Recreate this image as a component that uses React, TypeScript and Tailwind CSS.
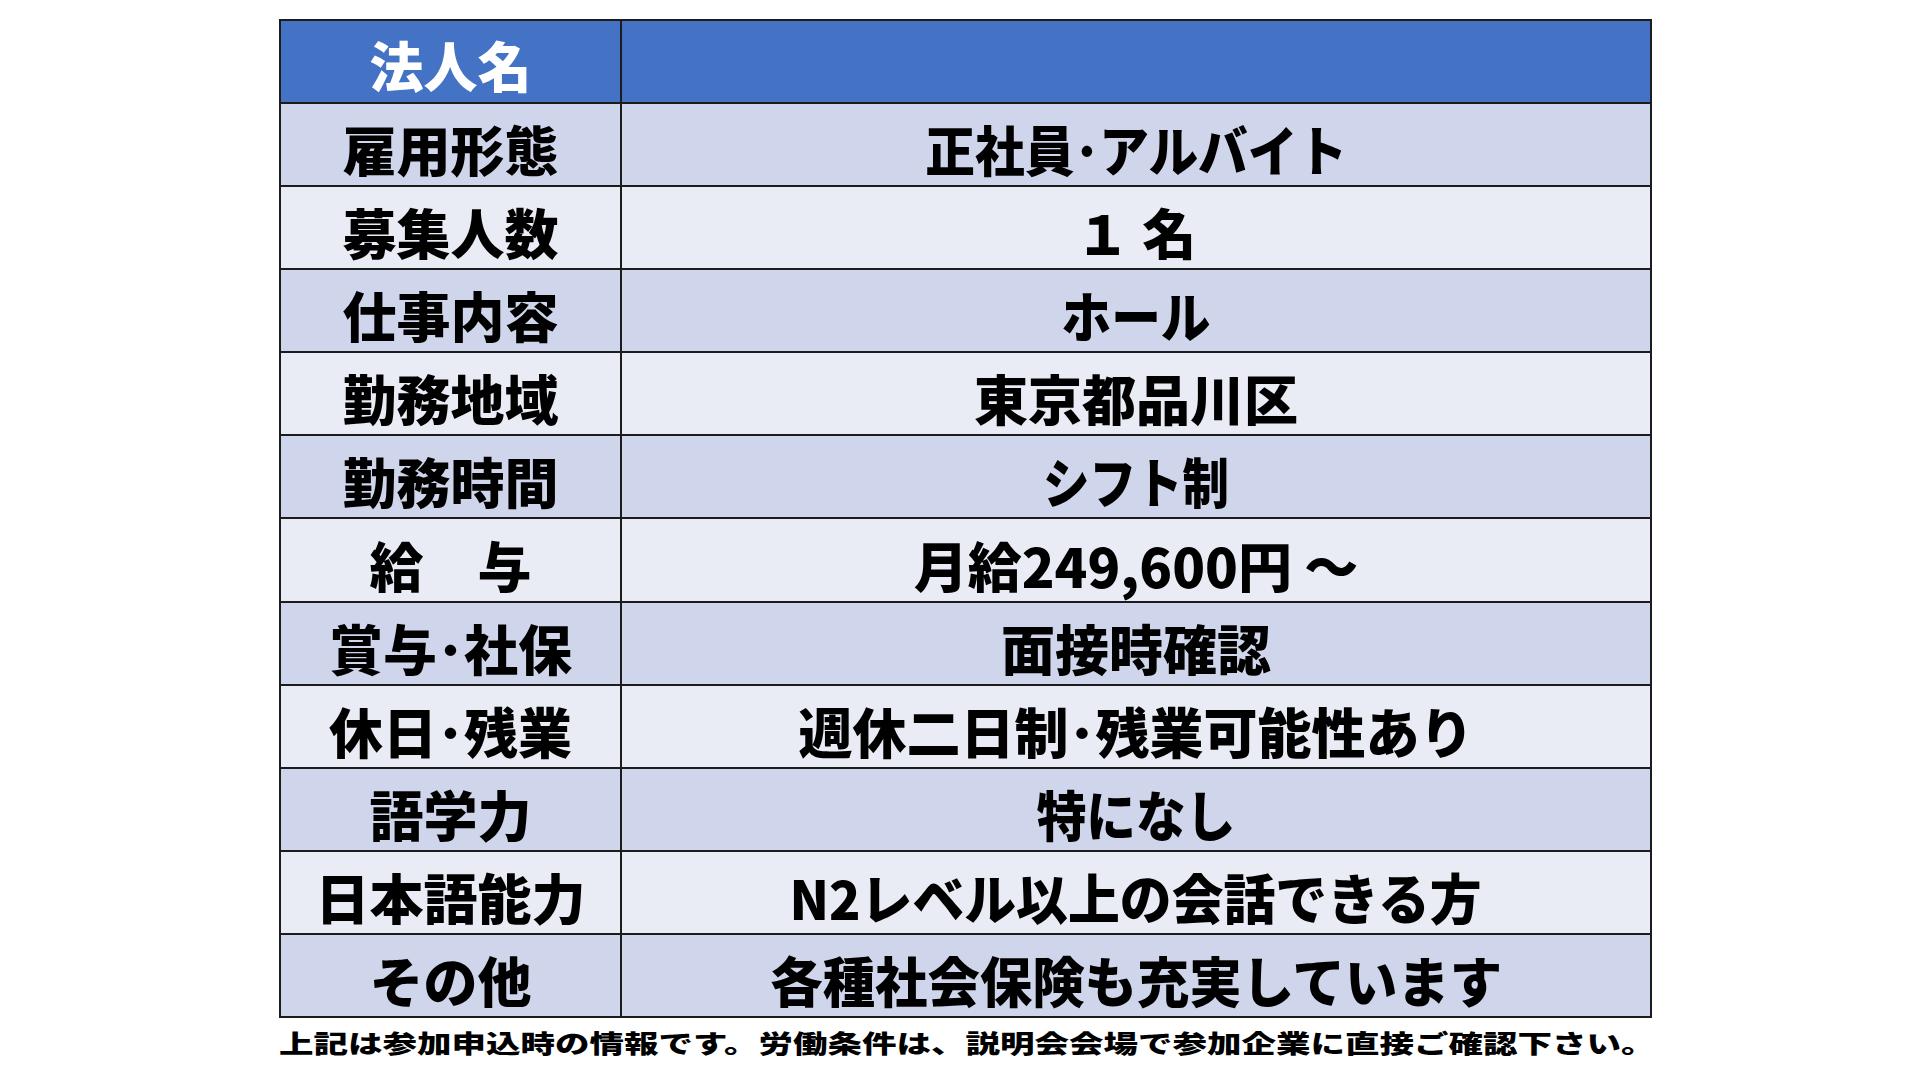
const font = { fontFamily: '"Noto Sans CJK JP", "Noto Sans", sans-serif' };

type Row = { label: string; value: string; ls?: string; vs?: string };

const rows: Row[] = [
  { label: '雇用形態', value: '正社員･アルバイト', vs: 'scale-x-[0.92]' },
  { label: '募集人数', value: '１ 名' },
  { label: '仕事内容', value: 'ホール', vs: 'scale-x-[0.92]' },
  { label: '勤務地域', value: '東京都品川区' },
  { label: '勤務時間', value: 'シフト制', vs: 'scale-x-[0.86]' },
  { label: '給　与', value: '月給249,600円 ～' },
  { label: '賞与･社保', value: '面接時確認' },
  { label: '休日･残業', value: '週休二日制･残業可能性あり' },
  { label: '語学力', value: '特になし', vs: 'scale-x-[0.92]' },
  { label: '日本語能力', value: 'N2レベル以上の会話できる方', vs: 'scale-x-[0.96]' },
  { label: 'その他', value: '各種社会保険も充実しています', vs: 'scale-x-[0.97]' },
];

const App = () => {
  return (
    <div className="w-[1920px] h-[1080px] bg-white overflow-hidden pt-[19px] pl-[279px] flex flex-col items-start" style={font}>
      <div className="w-[1373px] h-[999px] border-2 border-[#1c1c1c] flex flex-col">
        {/* header */}
        <div className="flex-1 flex bg-[#4472c4] border-b-2 border-[#1c1c1c]">
          <div className="w-[341px] border-r-2 border-[#1c1c1c] flex items-center justify-center pt-[7px]">
            <span className="inline-block text-[54px] leading-none font-black text-white whitespace-nowrap">法人名</span>
          </div>
          <div className="flex-1"></div>
        </div>

        {rows.map((row, i) => (
          <div
            key={row.label}
            className={`flex-1 flex ${i % 2 === 0 ? 'bg-[#cfd5ea]' : 'bg-[#e9ebf5]'} ${i < rows.length - 1 ? 'border-b-2 border-[#1c1c1c]' : ''}`}
          >
            <div className="w-[341px] border-r-2 border-[#1c1c1c] flex items-center justify-center pt-[9px]">
              <span className={`inline-block text-[54px] leading-none font-black text-black whitespace-nowrap ${row.ls ?? ''}`}>{row.label}</span>
            </div>
            <div className="flex-1 flex items-center justify-center pt-[9px]">
              <span className={`inline-block text-[54px] leading-none font-black text-black whitespace-pre ${row.vs ?? ''}`}>{row.value}</span>
            </div>
          </div>
        ))}
      </div>

      <p className="mt-[12px] inline-block origin-left scale-x-[1.38] text-[25px] leading-none font-black text-black whitespace-nowrap">
        上記は参加申込時の情報です。労働条件は、説明会会場で参加企業に直接ご確認下さい。
      </p>
    </div>
  );
};

export default App;
